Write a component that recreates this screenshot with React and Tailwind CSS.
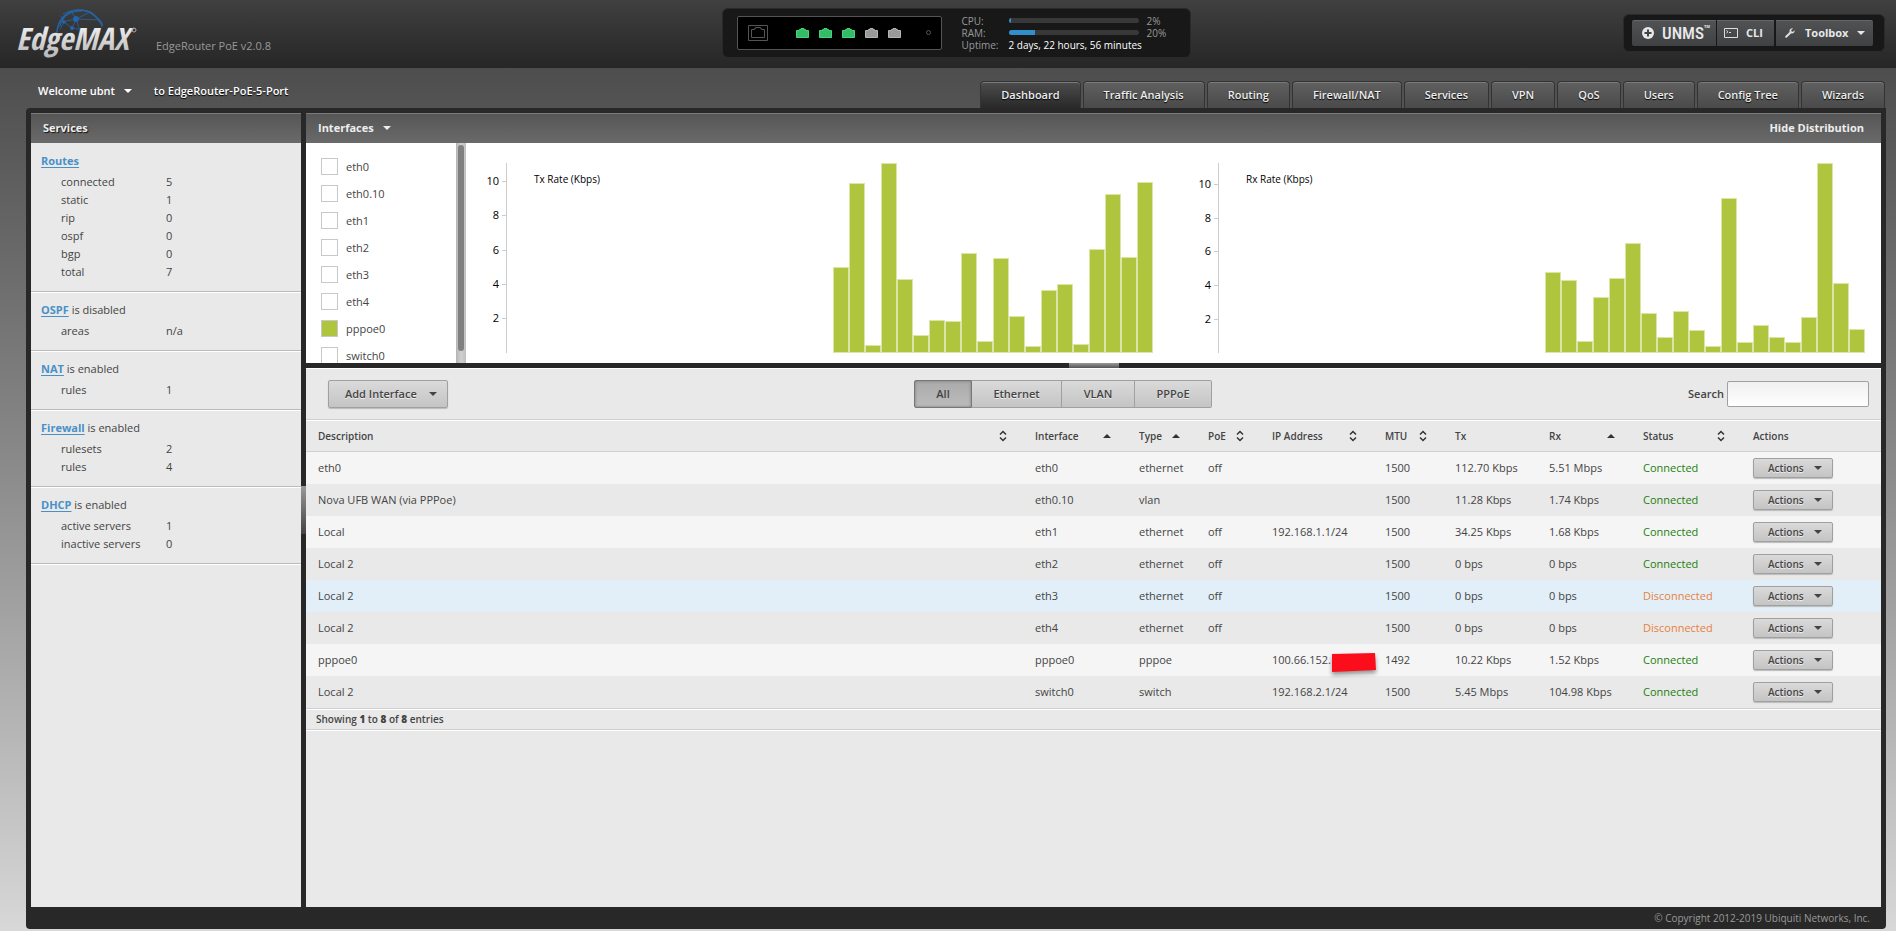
import React, { useState } from 'react';

const NAV_TABS = [
  'Dashboard',
  'Traffic Analysis',
  'Routing',
  'Firewall/NAT',
  'Services',
  'VPN',
  'QoS',
  'Users',
  'Config Tree',
  'Wizards'
];

const SERVICES = [
  {
    name: 'Routes',
    state: '',
    rows: [
      ['connected', '5'],
      ['static', '1'],
      ['rip', '0'],
      ['ospf', '0'],
      ['bgp', '0'],
      ['total', '7']
    ]
  },
  { name: 'OSPF', state: 'is disabled', rows: [['areas', 'n/a']] },
  { name: 'NAT', state: 'is enabled', rows: [['rules', '1']] },
  { name: 'Firewall', state: 'is enabled', rows: [['rulesets', '2'], ['rules', '4']] },
  { name: 'DHCP', state: 'is enabled', rows: [['active servers', '1'], ['inactive servers', '0']] }
];

const PORTS = ['eth0', 'eth0.10', 'eth1', 'eth2', 'eth3', 'eth4', 'pppoe0', 'switch0'];

const CHARTS = [
  {
    title: 'Tx Rate (Kbps)',
    max: 11.08,
    values: [5, 9.9, 0.45, 11.08, 4.3, 1.05, 1.95, 1.85, 5.85, 0.7, 5.55, 2.15, 0.4, 3.7, 4.05, 0.5, 6.05, 9.3, 5.6, 10]
  },
  {
    title: 'Rx Rate (Kbps)',
    max: 11.27,
    values: [4.8, 4.35, 0.7, 3.35, 4.45, 6.5, 2.4, 0.95, 2.5, 1.35, 0.4, 9.2, 0.65, 1.65, 0.95, 0.65, 2.15, 11.27, 4.15, 1.45]
  }
];

const COLUMNS = [
  { label: 'Description', sort: 'both', width: '' },
  { label: 'Interface', sort: 'asc', width: 'w-[104px]' },
  { label: 'Type', sort: 'asc', width: 'w-[69px]' },
  { label: 'PoE', sort: 'both', width: 'w-16' },
  { label: 'IP Address', sort: 'both', width: 'w-[113px]' },
  { label: 'MTU', sort: 'both', width: 'w-[70px]' },
  { label: 'Tx', sort: '', width: 'w-[94px]' },
  { label: 'Rx', sort: 'asc', width: 'w-[94px]' },
  { label: 'Status', sort: 'both', width: 'w-[110px]' },
  { label: 'Actions', sort: '', width: 'w-[140px]' }
];

const ROWS = [
  { desc: 'eth0', name: 'eth0', type: 'ethernet', poe: 'off', ip: '', mtu: 1500, tx: '112.70 Kbps', rx: '5.51 Mbps', up: true },
  { desc: 'Nova UFB WAN (via PPPoe)', name: 'eth0.10', type: 'vlan', poe: '', ip: '', mtu: 1500, tx: '11.28 Kbps', rx: '1.74 Kbps', up: true },
  { desc: 'Local', name: 'eth1', type: 'ethernet', poe: 'off', ip: '192.168.1.1/24', mtu: 1500, tx: '34.25 Kbps', rx: '1.68 Kbps', up: true },
  { desc: 'Local 2', name: 'eth2', type: 'ethernet', poe: 'off', ip: '', mtu: 1500, tx: '0 bps', rx: '0 bps', up: true },
  { desc: 'Local 2', name: 'eth3', type: 'ethernet', poe: 'off', ip: '', mtu: 1500, tx: '0 bps', rx: '0 bps', up: false, active: true },
  { desc: 'Local 2', name: 'eth4', type: 'ethernet', poe: 'off', ip: '', mtu: 1500, tx: '0 bps', rx: '0 bps', up: false },
  { desc: 'pppoe0', name: 'pppoe0', type: 'pppoe', poe: '', ip: '100.66.152.', masked: true, mtu: 1492, tx: '10.22 Kbps', rx: '1.52 Kbps', up: true },
  { desc: 'Local 2', name: 'switch0', type: 'switch', poe: '', ip: '192.168.2.1/24', mtu: 1500, tx: '5.45 Mbps', rx: '104.98 Kbps', up: true }
];

const Caret = () => (
  <svg className="h-1 w-2 shrink-0" viewBox="0 0 8 4" fill="currentColor">
    <path d="M0 0h8L4 4z" />
  </svg>
);

const SortIcon = ({ sort }) => {
  if (!sort) return null;
  return (
    <svg className="h-3 w-2 shrink-0" viewBox="0 0 8 12">
      {sort === 'asc' ? (
        <path d="M0 8h8L4 4z" fill="#333" />
      ) : (
        <path d="M1 4.5L4 1.5L7 4.5M1 7.5L4 10.5L7 7.5" fill="none" stroke="#333" strokeWidth="1.5" />
      )}
    </svg>
  );
};

const Logo = () => (
  <svg className="h-[50px] w-[124px] shrink-0" viewBox="0 0 124 50" role="img" aria-label="EdgeMAX">
    <defs>
      <linearGradient id="metal" x1="0" y1="0" x2="0" y2="1">
        <stop offset="0" stopColor="#ffffff" />
        <stop offset="1" stopColor="#b4b4b4" />
      </linearGradient>
    </defs>
    <g fill="none" stroke="#2465a8" strokeLinecap="round">
      <path d="M41 24C42 11 52 2 63 2C73 2 81 8 86 17" strokeWidth="1.6" />
      <path d="M44 18C47 7 55 3 66 3" strokeWidth="1" />
      <path d="M47 6C56 1 68 1 75 4M46 14L60 11L74 4M60 11L84 12M60 11L56 20L48 14M60 11L55 3M56 20L68 22M44 21L48 14L45 8M60 11L63 20M75 4L86 14L86 19" strokeWidth="0.8" />
    </g>
    <g fill="#2465a8">
      <circle cx="60" cy="11" r="3" />
      <circle cx="48" cy="14" r="1.8" />
      <circle cx="56" cy="20" r="2" />
    </g>
    <text x="0" y="42" fill="url(#metal)" fontSize="31" fontStyle="italic" fontFamily="'Open Sans Condensed', 'Roboto Condensed', 'Liberation Sans', sans-serif">
      Edge<tspan fontWeight="700">MAX</tspan>
    </text>
    <circle cx="118" cy="22" r="2" fill="none" stroke="#aaa" />
  </svg>
);

const PortIcon = ({ up }) => (
  <svg className="h-[10px] w-[13px]" viewBox="0 0 13 10">
    <path
      d="M0.5 9.5V2.5H3.5V1.5H5V0.5H8V1.5H9.5V2.5H12.5V9.5z"
      fill={up ? '#33bb66' : '#999'}
      stroke={up ? '#45d67d' : '#b5b5b5'}
    />
  </svg>
);

const Meter = ({ label, value }) => (
  <div className="flex h-3 items-center">
    <span className="w-[47px]">{label}:</span>
    <div className="h-[5px] w-[130px] overflow-hidden rounded-sm bg-[#383838]">
      <div className="h-full bg-[#338fcc]" style={{ width: `${value}%` }} />
    </div>
    <span className="pl-2">{value}%</span>
  </div>
);

const DeviceStatus = () => (
  <div className="flex items-center gap-5 rounded-md border border-[#2a2a2a] bg-[#181818] py-[6px] pl-[14px] pr-[22px]">
    <div className="flex h-[34px] w-[205px] items-center rounded-xs border border-[#555] bg-black px-[10px]">
      <svg className="h-4 w-5" viewBox="0 0 20 16" fill="none" stroke="#555">
        <path d="M0.5 0.5H19.5V15.5H0.5z" />
        <path d="M3.5 12.5V4.5H6.5V3.5H7.5V2.5H12.5V3.5H13.5V4.5H16.5V12.5z" />
      </svg>
      <div className="flex flex-1 gap-[10px] pl-7">
        {[true, true, true, false, false].map((up, index) => (
          <PortIcon key={index} up={up} />
        ))}
      </div>
      <span className="h-[5px] w-[5px] rounded-full border border-[#555]" />
    </div>
    <div className="w-[206px] text-[10px] leading-3 text-[#999]">
      <Meter label="CPU" value={2} />
      <Meter label="RAM" value={20} />
      <div className="flex h-3 items-center whitespace-nowrap">
        <span className="w-[47px]">Uptime:</span>
        <span className="text-white">2 days, 22 hours, 56 minutes</span>
      </div>
    </div>
  </div>
);

const HeaderButton = ({ children, className = '' }) => (
  <button
    type="button"
    className={`flex h-[26px] items-center border-t border-[#666] bg-linear-to-b from-[#505254] to-[#3f4143] font-bold text-[#e8e8e8] ${className}`}
  >
    {children}
  </button>
);

const Header = () => (
  <header className="grid h-[68px] grid-cols-[1fr_auto_1fr] items-center bg-linear-to-b from-[#404040] to-[#262626] pb-[3px] pl-4">
    <div className="flex items-center gap-4">
      <Logo />
      <span className="pt-[26px] text-[#999]">EdgeRouter PoE v2.0.8</span>
    </div>
    <DeviceStatus />
    <div className="mr-[11px] flex justify-self-end rounded-md border border-[#2a2a2a] bg-[#181818] py-[5px] pl-2 pr-[11px]">
      <HeaderButton className="w-[84px] rounded-l-xs pl-[10px]">
        <svg className="h-3 w-3" viewBox="0 0 12 12">
          <circle cx="6" cy="6" r="6" fill="#e8e8e8" />
          <path d="M6 2.5V9.5M2.5 6H9.5" stroke="#444" strokeWidth="2" />
        </svg>
        <span className="pl-2 font-['Roboto_Condensed','Liberation_Sans',sans-serif] text-[17px] font-medium">UNMS</span>
        <span className="pb-3 text-[4px]">TM</span>
      </HeaderButton>
      <HeaderButton className="ml-px w-[57px] gap-2 pl-[7px]">
        <svg className="h-[10px] w-[14px]" viewBox="0 0 14 10" fill="none" stroke="#ddd">
          <path d="M0.5 0.5H13.5V9.5H0.5zM2.5 2.5L4 3.8L2.5 5M5 4.5H7" />
        </svg>
        CLI
      </HeaderButton>
      <HeaderButton className="ml-[2px] w-[97px] rounded-r-xs pl-[9px]">
        <svg className="h-[10px] w-[10px]" viewBox="0 0 10 10">
          <path d="M1.2 8.8L5.5 4.5" stroke="#ddd" strokeWidth="2" strokeLinecap="round" />
          <path d="M8 0.4C6.3 -0.2 4.4 1 4.5 3C4.5 4.6 5.6 5.5 7 5.5C8.7 5.5 9.9 4 9.6 2.2L8 3.8L6.5 3.4L6.2 2.1z" fill="#ddd" />
        </svg>
        <span className="pl-[10px] pr-[9px]">Toolbox</span>
        <Caret />
      </HeaderButton>
    </div>
  </header>
);

const NavBar = ({ active, onSelect }) => (
  <div className="flex h-10 items-end justify-between pl-[38px] pr-[11px]">
    <div className="flex items-center gap-[22px] pb-[9px] font-semibold text-white text-shadow-[0_1px_1px_#000]">
      <button type="button" className="flex items-center gap-[9px]">
        Welcome ubnt
        <Caret />
      </button>
      <span>to EdgeRouter-PoE-5-Port</span>
    </div>
    <nav className="flex gap-[2px]">
      {NAV_TABS.map((tab) => (
        <button
          key={tab}
          type="button"
          onClick={() => onSelect(tab)}
          className={`h-[27px] rounded-t-sm border border-b-0 border-[#333] bg-linear-to-b px-5 font-semibold text-[#eee] text-shadow-[0_1px_1px_#000] inset-shadow-[0_1px_0_#7a7a7a] ${
            tab === active ? 'from-[#4d4d4d] to-[#292929]' : 'from-[#606060] to-[#4a4a4a]'
          }`}
        >
          {tab}
        </button>
      ))}
    </nav>
  </div>
);

const panelHeading =
  'flex h-[30px] items-center justify-between border-t border-[#7a7a7a] bg-linear-to-b from-[#565656] to-[#6a6a6a] pb-[2px] pl-3 pr-[17px] font-bold text-[#eee] text-shadow-[1px_1px_1px_#111]';

const Sidebar = () => (
  <aside className="w-[270px] shrink-0 bg-[#e9e9e9]">
    <h2 className={panelHeading}>Services</h2>
    {SERVICES.map((service) => (
      <section key={service.name} className="border-b border-[#bbb] pb-[10px] pl-[10px] pt-[9px] leading-[18px] shadow-[0_1px_0_#fff]">
        <h3 className="mb-[3px]">
          <a href="#" className="font-bold text-[#4a90c8] underline underline-offset-2">{service.name}</a> {service.state}
        </h3>
        <dl>
          {service.rows.map(([label, value]) => (
            <div key={label} className="flex pl-5">
              <dt className="w-[105px]">{label}</dt>
              <dd>{value}</dd>
            </div>
          ))}
        </dl>
      </section>
    ))}
  </aside>
);

const PortList = ({ selected, onToggle }) => (
  <div className="flex h-[220px] w-40 shrink-0 justify-between overflow-hidden">
    <ul className="flex flex-col gap-[10px] pl-[15px] pt-[15px]">
      {PORTS.map((port) => (
        <li key={port}>
          <label className="flex h-[17px] items-center gap-2 leading-[14px]">
            <input
              type="checkbox"
              checked={selected.includes(port)}
              onChange={() => onToggle(port)}
              className="h-[17px] w-[17px] appearance-none border border-[#c8c8c8] bg-white checked:bg-[#afc53e]"
            />
            {port}
          </label>
        </li>
      ))}
    </ul>
    <div className="h-full w-[10px] bg-linear-to-r from-[#b4b4b4] via-[#d0d0d0] to-[#c0c0c0] px-[2px] pt-[2px]">
      <div className="h-[206px] rounded-full bg-[#808080]" />
    </div>
  </div>
);

const RateChart = ({ title, max, values }) => (
  <div className="flex h-[190px] flex-1 text-[10px] text-black">
    <svg className="h-[190px] w-[41px] shrink-0 overflow-visible" viewBox="0 0 41 190">
      <path d="M40.5 0V190" stroke="#ccc" />
      {[2, 4, 6, 8, 10].map((tick) => {
        const y = Math.floor(190 - (tick / max) * 190);
        return (
          <g key={tick}>
            <path d={`M36 ${y + 0.5}H40`} stroke="#ccc" />
            <text x="33" y={y + 4} fontSize="11" textAnchor="end">{tick}</text>
          </g>
        );
      })}
    </svg>
    <div className="flex flex-1 items-start justify-between">
      <h4 className="pl-[27px] pt-2 leading-4">{title}</h4>
      <div className="flex h-full items-end">
        {values.map((value, index) => (
          <div
            key={index}
            className="w-4 border border-[#dbe5a8] bg-[#afc53e]"
            style={{ height: `${(value / max) * 100}%` }}
          />
        ))}
      </div>
    </div>
  </div>
);

const greyButton =
  'border border-[#a0a0a0] bg-linear-to-b from-[#dadada] to-[#c4c4c4] font-semibold text-[#444] text-shadow-[0_1px_0_#eee]';

const Toolbar = ({ filter, onFilter }) => (
  <div className="flex items-center justify-between border-b border-t border-b-[#d0d0d0] border-t-white pb-[11px] pl-[22px] pr-3 pt-[11px]">
    <button type="button" className={`flex h-7 w-[120px] items-center justify-between rounded-xs pl-4 pr-[10px] shadow-[0_1px_1px_#bbb] ${greyButton}`}>
      Add Interface
      <Caret />
    </button>
    <div className="flex">
      {[
        ['All', 'w-[58px] rounded-l-xs'],
        ['Ethernet', 'w-[90px]'],
        ['VLAN', 'w-[73px]'],
        ['PPPoE', 'w-[77px] rounded-r-xs']
      ].map(([label, shape]) => (
        <button
          key={label}
          type="button"
          onClick={() => onFilter(label)}
          className={`h-7 ${shape} ${
            label === filter
              ? 'border border-[#777] bg-linear-to-b from-[#aaa] to-[#bcbcbc] font-semibold text-[#444] inset-shadow-[0_0_3px_#777]'
              : `border-l-0 ${greyButton}`
          }`}
        >
          {label}
        </button>
      ))}
    </div>
    <label className="flex w-[191px] items-center justify-end gap-[3px] font-semibold">
      Search
      <input type="text" className="h-[26px] w-[142px] rounded-xs border border-[#a0a0a0] bg-linear-to-b from-[#f0f0f0] to-white px-2" />
    </label>
  </div>
);

const InterfaceTable = () => (
  <table className="w-full table-fixed border-collapse text-left">
    <thead>
      <tr className="h-[31px] border-b border-t border-b-[#d0d0d0] border-t-white text-[10px]">
        {COLUMNS.map((column) => (
          <th key={column.label} className={`pl-3 pr-4 font-semibold ${column.width}`}>
            <div className="flex items-center justify-between whitespace-nowrap">
              {column.label}
              <SortIcon sort={column.sort} />
            </div>
          </th>
        ))}
      </tr>
    </thead>
    <tbody>
      {ROWS.map((row) => (
        <tr key={row.name} className={`h-8 whitespace-nowrap ${row.active ? 'bg-[#e2eff8]' : 'odd:bg-[#f5f5f5]'}`}>
          <td className="pl-3">{row.desc}</td>
          <td className="pl-3">{row.name}</td>
          <td className="pl-3">{row.type}</td>
          <td className="pl-3">{row.poe}</td>
          <td className="pl-3">
            <span className="relative">
              {row.ip}
              {row.masked && (
                <svg className="absolute left-full top-0 h-[22px] w-[46px] overflow-visible drop-shadow-[0_3px_2px_#0006]" viewBox="0 0 46 22">
                  <path d="M1 2L44 1L45 18L1 20z" fill="#fc0d1b" />
                </svg>
              )}
            </span>
          </td>
          <td className="pl-3">{row.mtu}</td>
          <td className="pl-3">{row.tx}</td>
          <td className="pl-3">{row.rx}</td>
          <td className={`pl-3 ${row.up ? 'text-[#1a7f0e]' : 'text-[#e8803c]'}`}>{row.up ? 'Connected' : 'Disconnected'}</td>
          <td className="pl-3">
            <button type="button" className={`flex h-5 w-20 items-center justify-between rounded-xs pl-[14px] pr-[10px] text-[10px] shadow-[0_1px_1px_#bbb] ${greyButton}`}>
              Actions
              <Caret />
            </button>
          </td>
        </tr>
      ))}
    </tbody>
  </table>
);

const App = () => {
  const [tab, setTab] = useState('Dashboard');
  const [filter, setFilter] = useState('All');
  const [selected, setSelected] = useState(['pppoe0']);

  const togglePort = (port) => {
    setSelected((current) =>
      current.includes(port) ? current.filter((p) => p !== port) : [...current, port]
    );
  };

  return (
    <div className="flex min-h-screen flex-col bg-linear-to-b from-[#444] to-[#d8d8d8] font-['Open_Sans',sans-serif] text-[11px] leading-4 text-[#444]">
      <Header />
      <NavBar active={tab} onSelect={setTab} />

      <div className="mb-[2px] ml-[26px] mr-[10px] flex flex-1 flex-col rounded-tl-sm rounded-b-sm bg-[#282828] px-[5px] pt-[5px]">
        <div className="flex flex-1">
          <Sidebar />

          {/* Sidebar collapse handle */}
          <div className="flex w-[5px] items-center">
            <button type="button" aria-label="Toggle services" className="h-12 w-full bg-linear-to-b from-[#999] to-[#444]" />
          </div>

          <main className="flex min-w-0 flex-1 flex-col bg-[#e9e9e9]">
            <div className={panelHeading}>
              <button type="button" className="flex items-center gap-[9px]">
                Interfaces
                <Caret />
              </button>
              <button type="button">Hide Distribution</button>
            </div>

            {/* Distribution */}
            <div className="flex bg-white">
              <PortList selected={selected} onToggle={togglePort} />
              <div className="flex flex-1 gap-[25px] pr-4 pt-5">
                {CHARTS.map((chart) => (
                  <RateChart key={chart.title} {...chart} />
                ))}
              </div>
            </div>
            <div className="flex h-[5px] justify-center bg-[#282828]">
              <button type="button" aria-label="Toggle distribution" className="h-full w-[50px] bg-linear-to-b from-[#999] to-[#555]" />
            </div>

            <Toolbar filter={filter} onFilter={setFilter} />
            <InterfaceTable />
            <p className="border-b border-t border-[#d0d0d0] pl-[10px] text-[10px] font-semibold leading-5 shadow-[0_1px_0_#fff] inset-shadow-[0_1px_0_#fff]">
              Showing <b>1</b> to <b>8</b> of <b>8</b> entries
            </p>
          </main>
        </div>

        <footer className="flex h-[22px] items-center justify-end pr-[11px] text-[10px] text-[#999]">
          © Copyright 2012-2019 Ubiquiti Networks, Inc.
        </footer>
      </div>
    </div>
  );
};

export default App;
